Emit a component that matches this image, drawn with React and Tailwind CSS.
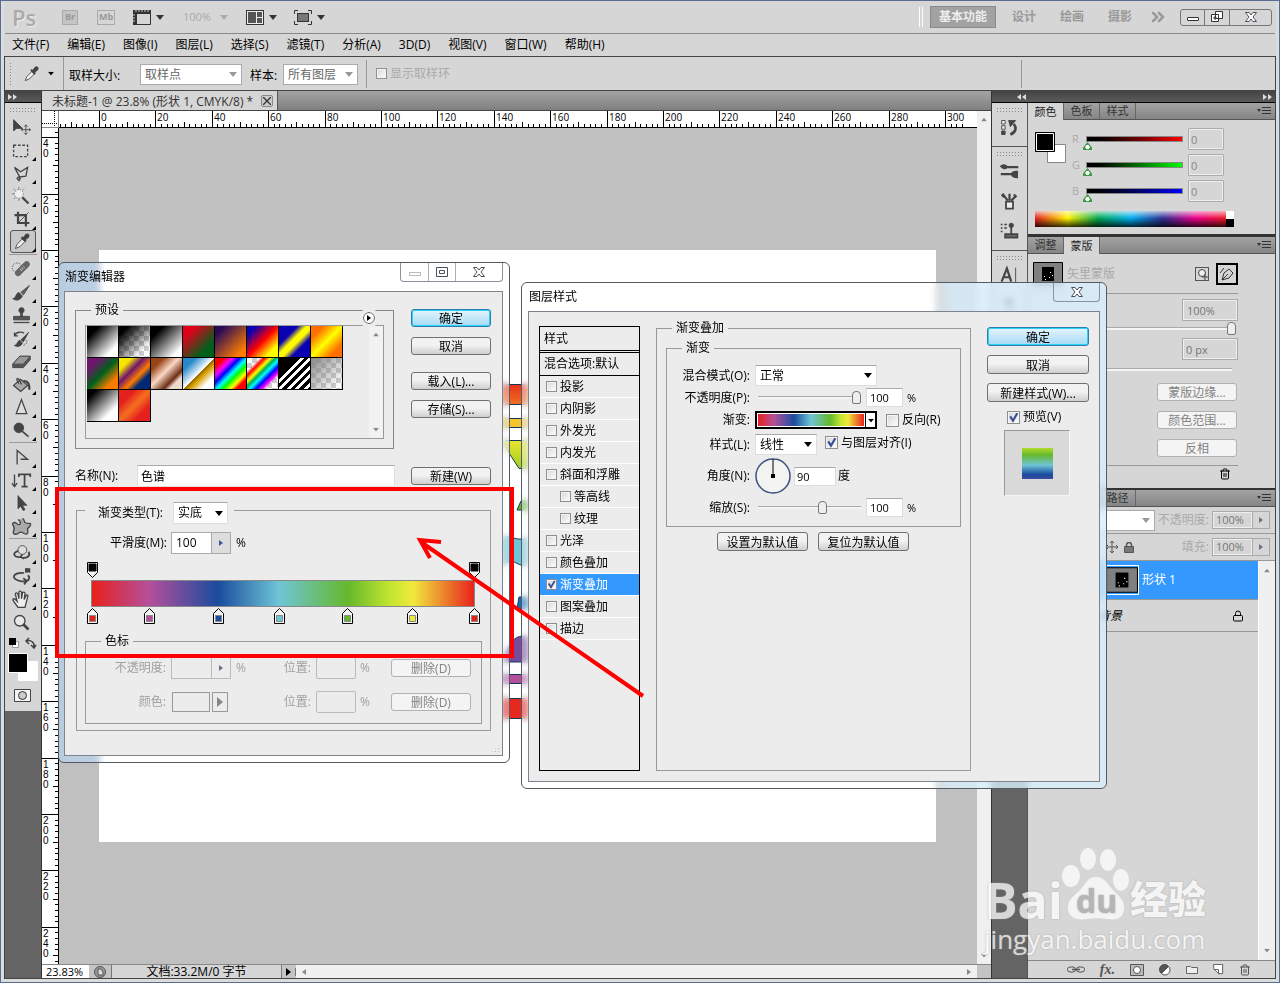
import { ChevronsRight, Link, Trash2, Lock } from 'lucide-react';
import { clsx } from 'clsx';

const MENUS = ['文件(F)', '编辑(E)', '图像(I)', '图层(L)', '选择(S)', '滤镜(T)', '分析(A)', '3D(D)', '视图(V)', '窗口(W)', '帮助(H)'];

const TOOLS = [
  { name: '移动', icon: <><path d="M3 3v13l3-3h7z" fill="#444" /><path d="M17 9v11M12 14.500h10M15 11l2-2 2 2M15 18l2 2 2-2M13.500 13l-2 1.500 2 1.500M20.500 13l2 1.500-2 1.500" /></>, noCorner: true },
  { name: '矩形选框', icon: <rect x="3" y="6" width="16" height="13" strokeDasharray="3 2" strokeWidth="1.500" /> },
  { name: '套索', icon: <path d="M4 5l7 5 8-5-2 10-7 1-6-11M10 16c-3 0-4 2-2 3s3-1 2-3l-1 5" strokeWidth="1.500" /> },
  { name: '魔棒', icon: <><circle cx="9" cy="9" r="5" fill="#eee" stroke="#777" strokeDasharray="1.500 1.500" /><path d="M9 1v3M9 14v3M1 9h3M3 3l2 2M15 3l-2 2M3 15l2-2" stroke="#777" /><path d="M13 13l7 7" strokeWidth="2.500" /></> },
  { name: '裁剪', icon: <><path d="M8 3v13h13M4 7h13v13" strokeWidth="2.500" /><path d="M9 15L20 4" /></> },
  { name: '吸管', icon: <><path d="M5 20l2-5 6-6 3 3-6 6z" fill="#eee" /><path d="M12 7l5 5M14 9l3-4c2-2 4 0 2 2l-4 3z" fill="#333" strokeWidth="2.500" /></>, active: true },
  { name: '修复画笔', sep: true, icon: <><circle cx="7" cy="10" r="5.500" strokeDasharray="1.500 1.500" /><path d="M8 16L18 6" strokeWidth="7" stroke="#666" strokeLinecap="round" /><path d="M11 13l4-4" stroke="#ccc" strokeWidth="3" strokeDasharray="1 1.500" /></> },
  { name: '画笔', icon: <><path d="M2 19c4 0 3-6 7-7l4 4c-2 5-7 6-11 3z" fill="#444" /><path d="M11 12l10-8-7 11" fill="#666" /></> },
  { name: '图章', icon: <><circle cx="12" cy="6" r="3" fill="#444" /><path d="M12 7v7" strokeWidth="3" /><path d="M3 13h18v4H3z" fill="#555" /><path d="M3 20h18" strokeWidth="1.500" /></> },
  { name: '历史画笔', icon: <><path d="M4 20c3 0 3-5 6-6l3 3c-1 4-6 5-9 3zM11 14l9-9-6 11" fill="#444" /><path d="M4 9c2-5 8-5 11-3M4 5v4h4" strokeWidth="1.500" /><path d="M18 14c1 3-2 6-5 6" strokeDasharray="1.500 1.500" /></> },
  { name: '橡皮擦', icon: <><path d="M2 19v-4l8-9h12v4l-8 9z" fill="#555" /><path d="M2 15l8-9h12l-8 9z" fill="#999" /></> },
  { name: '油漆桶', icon: <><path d="M3 13l8-7 8 7-8 7z" fill="#aaa" strokeWidth="1.500" /><path d="M12 12C8 1 4 5 9 11" strokeWidth="1.500" /><path d="M14 8c7 0 7 5 7 10" strokeWidth="2.500" /></> },
  { name: '锐化', icon: <path d="M12 3l6 16H6z" fill="#ddd" strokeWidth="1.500" /> },
  { name: '减淡', icon: <><circle cx="9" cy="9" r="5.500" fill="#444" /><path d="M13 13l7 6" strokeWidth="2" /></> },
  { name: '钢笔', sep: true, icon: <path d="M7 20V4l12 10h-8" strokeWidth="1.500" /> },
  { name: '文字', icon: <><path d="M4 5v13M1 15l3 4 3-4" strokeWidth="1.500" /><path d="M9 8V5h13v3M15.500 5v14M12 19h7" strokeWidth="2" /></> },
  { name: '路径选择', icon: <path d="M8 3v15l3-3 3 5 2-1-3-5h5z" fill="#444" /> },
  { name: '自定形状', icon: <path d="M13 3c3 0 1 4 4 5s7-1 5 3-4 2-3 5 0 6-4 4-4-2-7 0-7 0-5-3 0-5-1-7 2-4 5-1 6-2 1-5 3-6z" fill="#aaa" strokeWidth="1.500" /> },
  { name: '3D 旋转', sep: true, icon: <><circle cx="13" cy="8" r="5" fill="#ddd" /><path d="M8 9c-8 3-4 8 4 7M20 10c3 5-2 7-6 7M13 13l-2 3 4 2" strokeWidth="2" /></> },
  { name: '3D 环绕', icon: <><path d="M16 5h6" strokeWidth="5" /><path d="M15 8C4 7 1 12 5 15s10 3 13 2 4-5 1-6M14 14l4 3-3 4" strokeWidth="2" /></> },
  { name: '抓手', icon: <path d="M8 21l-5-7c-2-2 0-4 2-2l2 2-2-8c0-2 2-2 3 0l1 5V4c0-2 3-2 3 0v7l1-6c0-2 3-2 3 0l-1 7 2-4c1-2 3-1 2 1l-3 12z" fill="#eee" strokeWidth="1.500" /> },
  { name: '缩放', noCorner: true, icon: <><circle cx="10" cy="10" r="6" fill="#e8e8e8" strokeWidth="1.500" /><path d="M14 14l6 6" strokeWidth="3" /></> },
];

const PRESETS = [
  'bg-[linear-gradient(135deg,#000_20%,#fff_80%)]',
  'bg-[linear-gradient(135deg,#000_15%,transparent_80%),repeating-conic-gradient(#ccc_0_25%,#fff_0_50%)] [background-size:auto,10px_10px]',
  'bg-[linear-gradient(135deg,#000_20%,#fff_85%)]',
  'bg-[linear-gradient(135deg,#e3001b_20%,#00601b_75%)]',
  'bg-[linear-gradient(135deg,#290a59_15%,#ff7c00_85%)]',
  'bg-[linear-gradient(135deg,#0a00b2_15%,#ff0000_50%,#fffc00_80%)]',
  'bg-[linear-gradient(135deg,#0a00b2_30%,#fffc00_45%,#fffc00_55%,#0a00b2_70%)]',
  'bg-[linear-gradient(135deg,#ff6e00_20%,#ffff00_50%,#ff6e00_80%)]',
  'bg-[linear-gradient(135deg,#6f156c_20%,#00601b_50%,#fd7c00_80%)]',
  'bg-[linear-gradient(135deg,#f9e600_20%,#6f156c_40%,#fd7c00_60%,#002874_75%)]',
  'bg-[linear-gradient(135deg,#974618_20%,#fbd8c5_45%,#6c2e16_70%,#efdbcd_80%)]',
  'bg-[linear-gradient(135deg,#2989cc_20%,#fff_50%,#906a00_51%,#d99f00_60%,#fff_80%)]',
  'bg-[linear-gradient(135deg,#f00_15%,#f0f_28%,#00f_40%,#0ff_52%,#0f0_62%,#ff0_75%,#f00_84%)]',
  'bg-[linear-gradient(135deg,transparent_20%,#f00_28%,#ff0_38%,#00b050_46%,#0ff_54%,#00f_64%,#f0f_74%,transparent_80%),repeating-conic-gradient(#ccc_0_25%,#fff_0_50%)] [background-size:auto,10px_10px]',
  'bg-[linear-gradient(135deg,#000_30%,transparent_30%),repeating-linear-gradient(135deg,#000_0_3px,#fff_3px_6px)]',
  'bg-[linear-gradient(135deg,#888,transparent_90%),repeating-conic-gradient(#ccc_0_25%,#fff_0_50%)] [background-size:auto,10px_10px]',
  'bg-[linear-gradient(135deg,#000_15%,#fff_75%)]',
  'bg-[linear-gradient(135deg,#e6201e_25%,#f47020_50%,#e6201e_75%)]',
];

const STOPS = [
  [6, '#e8201c'], [63, '#b54f9b'], [132, '#1a4c9f'], [193, '#6ec5d6'], [261, '#66b82b'], [326, '#f1e83c'], [388, '#e8201c'],
];

const EFFECTS = [
  ['投影'], ['内阴影'], ['外发光'], ['内发光'], ['斜面和浮雕'], ['等高线', 'sub'], ['纹理', 'sub'],
  ['光泽'], ['颜色叠加'], ['渐变叠加', 'on'], ['图案叠加'], ['描边'],
];

const Caret = ({ className = 'fill-black' }) => (
  <svg viewBox="0 0 8 5" className={clsx('pointer-events-none h-[5px] w-2 shrink-0', className)}><path d="M0 0h8L4 5z" /></svg>
);

const Play = ({ className = 'fill-gray-500' }) => (
  <svg viewBox="0 0 4 6" className={clsx('h-1.5 w-1 shrink-0', className)}><path d="M0 0v6l4-3z" /></svg>
);

const Check = ({ label, checked, className, box = 'size-[13px]' }) => (
  <label className={clsx('flex items-center gap-[3px] whitespace-nowrap', className)}>
    <span className={clsx('grid shrink-0', box)}>
      <input type="checkbox" defaultChecked={checked} className={clsx('peer col-start-1 row-start-1 appearance-none border border-[#8e8f8f] bg-linear-to-br from-[#d3d6da] to-white shadow-[inset_0_0_0_1px_#f4f4f4]', box)} />
      <svg viewBox="0 0 12 12" className={clsx('pointer-events-none invisible col-start-1 row-start-1 fill-none stroke-[#3b4d91] stroke-2 peer-checked:visible', box)}><path d="M3 5l2.500 4L9.500 2" /></svg>
    </span>
    {label}
  </label>
);

const Select = ({ value, label, id, className, caret }) => (
  <span className={clsx('flex shrink-0 items-center border bg-white', className)}>
    <select id={id} aria-label={label} className="w-full min-w-0 appearance-none bg-transparent px-1 outline-none">
      <option>{value}</option>
    </select>
    <span className="pointer-events-none -ml-3 mr-1"><Caret className={caret} /></span>
  </span>
);

const DialogButton = ({ children, primary, disabled, className = 'h-[18px] w-20' }) => (
  <button
    disabled={disabled}
    className={clsx(
      'flex shrink-0 items-center justify-center whitespace-nowrap rounded-[3px] border pt-0.5',
      primary && 'border-[#2c7fa8] bg-linear-to-b from-[#e3f4fd] to-[#a7dbf5] shadow-[inset_0_0_0_1px_#2cd0fb]',
      disabled && 'border-[#adb2b5] bg-[#f4f4f4] text-[#838383]',
      !primary && !disabled && 'border-[#707070] bg-linear-to-b from-[#f2f2f2] from-45% to-[#cfcfcf]',
      className,
    )}
  >
    {children}
  </button>
);

const PanelTabs = ({ tabs, active }) => (
  <div className="flex h-[17px] shrink-0 items-stretch border-b border-[#555] bg-linear-to-b from-[#a3a3a3] to-[#858585]">
    {tabs.map((t) => (
      <button key={t} className={clsx('w-9 border-r border-[#666] text-[11px] leading-4', t === active ? '-mb-px bg-[#d6d6d6] text-[#222]' : 'text-[#333]')}>{t}</button>
    ))}
    <button aria-label="面板菜单" className="ml-auto mr-1">
      <svg viewBox="0 0 14 8" className="h-2 w-3.5 stroke-[#333]"><path d="M0 2h4L2 5z" fill="#333" stroke="none" /><path d="M5 .5h9M5 3.500h9M5 6.500h9" /></svg>
    </button>
  </div>
);

const Grip = () => <div className="mx-auto h-[5px] w-7 shrink-0 bg-[radial-gradient(#888_40%,transparent_45%)] [background-size:3px_3px]" />;

const HorizontalRuler = () => (
  <svg className="h-[17px] min-w-0 flex-1 bg-white font-['Open_Sans',sans-serif] text-[10px]">
    {Array.from({ length: 161 }, (_, i) => {
      const n = i - 7;
      const x = Math.round(40 + n * 5.64) + 0.5;
      const len = n % 10 === 0 ? 17 : n % 5 === 0 ? 6 : 4;
      return <path key={n} d={`M${x} 17v-${len}`} stroke="#000" />;
    })}
    {Array.from({ length: 16 }, (_, i) => (
      <text key={i} x={Math.round(42 + i * 56.4)} y="10">{i * 20}</text>
    ))}
    <rect y="16" width="100%" height="1" />
  </svg>
);

const VerticalRuler = () => (
  <svg className="w-[17px] shrink-0 bg-white font-['Liberation_Sans',sans-serif] text-[10px]">
    {Array.from({ length: 150 }, (_, i) => {
      const n = i - 21;
      const y = Math.round(122 + n * 5.64) + 0.5;
      const len = n % 10 === 0 ? 17 : n % 5 === 0 ? 6 : 4;
      return <path key={n} d={`M17 ${y}h-${len}`} stroke="#000" />;
    })}
    {Array.from({ length: 15 }, (_, i) => String(Math.abs(i - 2) * 20).split('').map((d, k) => (
      <text key={`${i}-${k}`} x="1" y={Math.round(132 + (i - 2) * 56.4) + k * 10}>{d}</text>
    )))}
    <rect x="16" width="1" height="100%" />
  </svg>
);

const CloseGlyph = () => (
  <svg viewBox="0 0 12 10" className="h-2.5 w-3 fill-white stroke-[#4a4f5c]"><path d="M.5.500h3.500l2 2.500L8 .500h3.500L8 5l3.500 4.500H8L6 7 4 9.500H.5L4 5z" /></svg>
);

const TopBar = () => (
  <header className="flex h-8 shrink-0 items-center pl-2 pr-1 text-[#999]">
    <span className="w-[50px] text-[22px] font-semibold leading-8 text-[#aaa] [text-shadow:1px_1px_0_#eee]">Ps</span>
    <button className="h-[15px] w-4 border border-[#aaa] bg-[#c4c4c4] text-[9px] font-bold leading-3 text-[#999]">Br</button>
    <button className="ml-[19px] h-[15px] w-[18px] border border-[#aaa] text-[9px] font-bold leading-3">Mb</button>
    <button aria-label="查看额外内容" className="ml-[18px] flex items-center gap-[5px]">
      <svg viewBox="0 0 18 15" className="h-[15px] w-[18px]"><path d="M0 0h18v4H4v11H0z" fill="#333" /><path d="M17.500 4v10.500H4" stroke="#333" fill="none" /><path d="M3 0v2M6 0v2M9 0v2M12 0v2M15 0v2M0 5h2M0 8h2M0 11h2" stroke="#ccc" /></svg>
      <Caret className="fill-[#333]" />
    </button>
    <button className="ml-[19px] flex items-center gap-[9px] text-[11px] text-[#aaa]">100%<Caret className="fill-[#aaa]" /></button>
    <button aria-label="排列文档" className="ml-[18px] flex items-center gap-[5px]">
      <svg viewBox="0 0 18 15" className="h-[15px] w-[18px]"><rect x=".5" y=".5" width="17" height="14" fill="#eee" stroke="#333" /><path d="M2 2h8v11H2zM11 2h5v5h-5zM11 8h5v5h-5z" fill="#555" /></svg>
      <Caret className="fill-[#333]" />
    </button>
    <button aria-label="屏幕模式" className="ml-[17px] flex items-center gap-[5px]">
      <svg viewBox="0 0 18 15" className="h-[15px] w-[18px]"><rect x="3.500" y="3.500" width="11" height="8" fill="#777" stroke="#333" /><path d="M.5 4V.500H4M14 .5h3.500V4M17.500 11v3.500H14M4 14.500H.5V11" fill="none" stroke="#333" /></svg>
      <Caret className="fill-[#333]" />
    </button>
    <span className="ml-auto mr-[7px] h-5 w-1 border-x border-white" />
    <nav className="flex items-center font-bold">
      <button className="h-[22px] w-[66px] border border-[#8a8a8a] bg-[#a2a2a2] text-[#eee]">基本功能</button>
      <button className="w-14">设计</button>
      <button className="w-10">绘画</button>
      <button className="w-14">摄影</button>
      <ChevronsRight className="size-5" strokeWidth={3} />
    </nav>
    <div className="ml-3 flex h-[17px] rounded-[3px] border border-[#777] text-[#333]">
      <button aria-label="最小化" className="flex w-6 items-center justify-center border-r border-[#777] pt-1"><span className="h-1 w-3 rounded-[1px] border border-[#333] bg-white" /></button>
      <button aria-label="还原" className="flex w-[25px] items-center justify-center border-r border-[#777]">
        <svg viewBox="0 0 12 12" className="size-3 fill-white stroke-[#333]"><path d="M4.500.500h7v7h-7zM.5 3.500h7v7h-7zM3 6h2v2H3z" /></svg>
      </button>
      <button aria-label="关闭" className="flex w-[41px] items-center justify-center"><CloseGlyph /></button>
    </div>
  </header>
);

const OptionsBar = () => (
  <div className="flex h-[34px] shrink-0 items-center border-b border-[#444] pl-1">
    <span className="h-6 w-1 bg-[radial-gradient(#888_40%,transparent_45%)] [background-size:3px_3px]" />
    <button aria-label="吸管工具" className="ml-2 flex items-center gap-1.5">
      <svg viewBox="0 0 24 24" className="size-5 fill-none stroke-[#444]">{TOOLS[5].icon}</svg>
      <Caret className="scale-75 fill-black" />
    </button>
    <span className="ml-2 h-full border-l border-[#999]" />
    <label htmlFor="sample" className="ml-[5px] mt-1 w-[71px]">取样大小:</label>
    <Select id="sample" value="取样点" className="mt-0.5 h-[21px] w-[102px] border-[#aaa] text-[#666]" caret="fill-[#999]" />
    <label htmlFor="source" className="ml-2 mt-1 w-[33px]">样本:</label>
    <Select id="source" value="所有图层" className="mt-0.5 h-[21px] w-[75px] border-[#aaa] text-[#666]" caret="fill-[#999]" />
    <span className="ml-2 mr-[9px] h-7 border-l border-[#999]" />
    <Check label="显示取样环" box="size-[11px]" className="text-[#aaa]" />
    <span className="ml-auto mr-[253px] h-7 border-l border-[#999]" />
  </div>
);

const Toolbox = () => (
  <aside className="flex w-[37px] shrink-0 flex-col border-r border-[#333] bg-[#646464]">
    <button aria-label="展开" className="flex h-3 shrink-0 items-center gap-px border-b border-black bg-linear-to-b from-[#444] to-[#5a5a5a] pl-[3px]">
      <Play className="fill-[#ddd]" /><Play className="fill-[#ddd]" />
    </button>
    <div className="flex flex-col bg-[#d6d6d6] pb-1 pt-1">
      <Grip />
      <div className="mt-[3px] flex flex-col items-center">
        {TOOLS.map(({ name, icon, active, sep, noCorner }) => (
          <div key={name} className={clsx('flex w-7 flex-col items-center', sep && 'mt-px border-t border-[#999] pt-0.5')}>
            <button title={name} className={clsx('flex h-[23px] w-[26px] items-end justify-center', active && 'rounded-[3px] border border-[#555] bg-[#c8c8c8]')}>
              <svg viewBox="0 0 24 24" className="size-[21px] shrink-0 fill-none stroke-[#444]">{icon}</svg>
              <svg viewBox="0 0 4 4" className={clsx('size-1 shrink-0', noCorner && 'invisible')}><path d="M4 0v4H0z" /></svg>
            </button>
          </div>
        ))}
      </div>
      <svg viewBox="0 0 36 74" className="h-[74px] w-9">
        <path d="M7.500 8.500h6v6h-6z" fill="#fff" stroke="#999" /><path d="M4 5h7v7H4z" />
        <path d="M21 8c5-2 9 2 8 6M24 5l-3 3 3 3M26 12l3 3 2-3" fill="none" stroke="#444" strokeWidth="1.500" />
        <path d="M13 28h20v20H13z" fill="#fff" />
        <path d="M3.500 20.500h19v19h-19z" stroke="#fff" />
        <path d="M9.500 56.500h16v12h-16z" fill="#f5f5f5" stroke="#444" /><circle cx="17.500" cy="62.500" r="4" fill="#ccc" stroke="#333" />
      </svg>
    </div>
  </aside>
);

// Strips of the rainbow shape that show between the two dialogs
const Artwork = () => (
  <svg viewBox="0 0 30 350" className="ml-[400px] mt-[130px] h-[350px] w-[30px] stroke-[#103a5c]">
    <defs>
      <linearGradient id="art-r" x1="0" x2="0" y1="0" y2="1"><stop stopColor="#e8321c" /><stop offset="1" stopColor="#f07022" /></linearGradient>
      <linearGradient id="art-y" x1="0" x2="0" y1="0" y2="1"><stop stopColor="#e8e430" /><stop offset="1" stopColor="#a5cc20" /></linearGradient>
    </defs>
    <path d="M2 4.500h28v20H2z" fill="url(#art-r)" />
    <path d="M2 38.500h28v9H2z" fill="#f6c42e" />
    <path d="M3 60.500h27v28h-10l-9-14z" fill="url(#art-y)" />
    <path d="M18 130l4-9h8v9z" fill="#66b82b" />
    <path d="M2 158c8-4 16 4 26 0v26c-8 6-14-10-24 2z" fill="#6ec5d6" />
    <path d="M20 217h10v12H18z" fill="#1a6cb5" />
    <path d="M4 282c5-22 16-30 26-24v24z" fill="#7a4aa0" />
    <path d="M2 294.500h28v9H2z" fill="#b54f9b" />
    <path d="M2 318.500h28v20H2z" fill="#e6281f" />
  </svg>
);

const ScrollArrow = ({ className }) => <Caret className={clsx('mx-auto fill-[#888] scale-75', className)} />;

const DocumentWindow = () => (
  <main className="flex min-w-0 flex-1 flex-col border-r border-[#333]">
    <div className="flex h-5 shrink-0 border-b border-[#444] bg-linear-to-b from-[#a3a3a3] to-[#808080]">
      <div className="flex w-[236px] items-center justify-between border-r border-[#555] bg-[#d6d6d6] pl-2.5 pr-1 text-[#333]">
        <span className="whitespace-nowrap pt-0.5">未标题-1 @ 23.8% (形状 1, CMYK/8) *</span>
        <button aria-label="关闭文档" className="flex size-3 items-center justify-center rounded-[2px] border border-[#888] bg-[#ccc]">
          <svg viewBox="0 0 6 6" className="size-2 stroke-[#333]"><path d="M0 0l6 6M6 0L0 6" /></svg>
        </button>
      </div>
    </div>
    <div className="flex flex-1">
      <div className="flex min-w-0 flex-1 flex-col">
        <div className="flex shrink-0">
          <svg className="size-[17px] shrink-0 bg-white"><path d="M12.500 0v17M0 12.500h17" stroke="#000" strokeDasharray="1 1" /><path d="M16.500 0v17M0 16.500h17" stroke="#888" /></svg>
          <HorizontalRuler />
        </div>
        <div className="flex flex-1">
          <VerticalRuler />
          <div className="flex flex-1 bg-[#c0c0c0] pb-[122px] pl-10 pr-[41px] pt-[122px]">
            <div className="flex-1 bg-white"><Artwork /></div>
          </div>
        </div>
      </div>
      <div className="flex w-3.5 shrink-0 flex-col justify-between bg-[#f0f0f0] py-1.5"><ScrollArrow className="rotate-180" /><ScrollArrow /></div>
    </div>
    <div className="flex h-[14px] shrink-0 items-center border-t border-[#888] bg-[#c4c4c4] leading-[13px]">
      <span className="w-[47px] bg-white pl-1 text-[11px]">23.83%</span>
      <span className="flex w-[22px] justify-center">
        <svg viewBox="0 0 12 12" className="size-3 fill-[#999] stroke-[#555]"><circle cx="6" cy="6" r="5.500" /><path d="M4 3h3l2 3v3H4z" fill="#ddd" /></svg>
      </span>
      <span className="w-[171px] border-x border-[#777] bg-[#d6d6d6] text-center">文档:33.2M/0 字节</span>
      <button aria-label="状态菜单" className="flex w-3.5 justify-center border-r border-[#777]"><svg viewBox="0 0 5 8" className="h-2 w-[5px]"><path d="M0 0v8l5-4z" /></svg></button>
      <span className="flex h-full flex-1 items-center justify-between bg-[#f0f0f0] px-1.5"><Play className="rotate-180 fill-[#888]" /><Play className="fill-[#888]" /></span>
      <span className="w-3.5" />
    </div>
  </main>
);

const DOCK = [
  [{ name: '历史记录', icon: <><path d="M3 4h4v4H3zM3 10h4v4H3z" fill="#eee" /><path d="M3 16h4v4H3z" fill="#444" /><path d="M13 20c7-3 7-8 4-12" strokeWidth="3" /><path d="M11 4h8l-6 7z" fill="#444" /></> }],
  [
    { name: '画笔预设', icon: <><path d="M2 6c3-3 7-1 8 1-3 3-7 1-8-1zM14 15c2-4 6-3 7-3v7c-4 0-6-1-7-4z" fill="#444" strokeWidth="1.500" /><path d="M10 7h12M2 15h12" strokeWidth="2.500" /></> },
    { name: '画笔', icon: <><path d="M8 12h8v8H8z" fill="#eee" strokeWidth="2" /><path d="M10 11L4 3M12 11V3M14 11l5-5M3 4l3 3M17 4l3 3" strokeWidth="2.500" /></> },
    { name: '仿制源', icon: <><path d="M2 4h2M6 4h3M2 8h2M6 8h3M2 12h2" strokeWidth="1.500" /><circle cx="14" cy="5" r="2.500" fill="#444" /><path d="M14 6v8M7 15h14v4H7z" fill="#666" strokeWidth="2" /></> },
  ],
  [
    { name: '字符', icon: <><path d="M3 19L9 4l5 15M5 14h7" strokeWidth="2.500" /><path d="M19 3v17" /></> },
    { name: '段落', icon: <path d="M10 4a4 4 0 000 8V4h5v16M12 4v16" fill="#444" /> },
  ],
];

const DockStrip = () => (
  <div className="flex w-9 shrink-0 flex-col border-r border-[#555] bg-[#646464]">
    {DOCK.map((group, i) => (
      <div key={i} className="flex flex-col items-center border-b border-[#555] bg-[#d6d6d6] pb-[7px] pt-1">
        <Grip />
        <div className="mt-1 flex flex-col gap-[7px]">
          {group.map(({ name, icon }) => (
            <button key={name} title={name} className="py-px"><svg viewBox="0 0 24 24" className="size-[21px] fill-none stroke-[#444]">{icon}</svg></button>
          ))}
        </div>
      </div>
    ))}
  </div>
);

const CHANNELS = [
  ['R', '[&::-webkit-slider-runnable-track]:bg-linear-to-r [&::-webkit-slider-runnable-track]:from-black [&::-webkit-slider-runnable-track]:to-[#f00]'],
  ['G', '[&::-webkit-slider-runnable-track]:bg-linear-to-r [&::-webkit-slider-runnable-track]:from-black [&::-webkit-slider-runnable-track]:to-[#0f0]'],
  ['B', '[&::-webkit-slider-runnable-track]:bg-linear-to-r [&::-webkit-slider-runnable-track]:from-black [&::-webkit-slider-runnable-track]:to-[#00f]'],
];

const ColorPanel = () => (
  <section className="flex h-[131px] shrink-0 flex-col">
    <PanelTabs tabs={['颜色', '色板', '样式']} active="颜色" />
    <div className="flex flex-1 flex-col px-[7px] pt-2">
      <div className="flex">
        <svg viewBox="0 0 34 34" className="mt-1 size-[34px]"><path d="M12.500 12.500h18v18h-18z" fill="#fff" stroke="#888" /><path d="M.5.500h19v19H.5z" stroke="#000" /><path d="M1.500 1.500h17v17h-17z" stroke="#fff" /></svg>
        <div className="ml-[3px] flex flex-col gap-1">
          {CHANNELS.map(([ch, track]) => (
            <label key={ch} className="flex h-[22px] items-center text-[11px] text-[#aaa]">
              <span className="w-3.5">{ch}</span>
              <input type="range" defaultValue="0" aria-label={ch} className={clsx('w-[97px] appearance-none bg-transparent [&::-webkit-slider-runnable-track]:h-1.5 [&::-webkit-slider-runnable-track]:border [&::-webkit-slider-runnable-track]:border-[#888] [&::-webkit-slider-thumb]:-ml-1 [&::-webkit-slider-thumb]:mt-[5px] [&::-webkit-slider-thumb]:h-2 [&::-webkit-slider-thumb]:w-[9px] [&::-webkit-slider-thumb]:appearance-none [&::-webkit-slider-thumb]:bg-[radial-gradient(circle_at_50%_65%,#fff_28%,#3f9a45_34%)] [&::-webkit-slider-thumb]:[clip-path:polygon(50%_0,100%_70%,100%_100%,0_100%,0_70%)]', track)} />
              <input defaultValue="0" aria-label={`${ch} 值`} className="ml-[5px] h-[22px] w-9 rounded-[1px] border border-[#aaa] px-0.5 text-[#888] shadow-[inset_0_0_0_1px_#eee]" />
            </label>
          ))}
        </div>
      </div>
      <div className="mt-[9px] flex h-4 w-[199px]">
        <div className="flex-1 bg-[linear-gradient(to_bottom,#fffa,transparent_45%,#000c),linear-gradient(to_right,#e02020,#fff200_17%,#00a650_33%,#00aeef_50%,#2e3192_67%,#ec008c_84%,#ed1c24)]" />
        <div className="w-2 bg-linear-to-b from-white from-50% to-black to-50%" />
      </div>
    </div>
  </section>
);

const PanelSlider = ({ label, value }) => (
  <input type="range" aria-label={label} defaultValue={value} className="block h-3.5 w-full appearance-none bg-transparent [&::-webkit-slider-runnable-track]:h-[3px] [&::-webkit-slider-runnable-track]:border-t [&::-webkit-slider-runnable-track]:border-[#aaa] [&::-webkit-slider-runnable-track]:bg-[#f4f4f4] [&::-webkit-slider-thumb]:mt-[-6px] [&::-webkit-slider-thumb]:h-[13px] [&::-webkit-slider-thumb]:w-[9px] [&::-webkit-slider-thumb]:appearance-none [&::-webkit-slider-thumb]:rounded-t-[4px] [&::-webkit-slider-thumb]:rounded-b-[2px] [&::-webkit-slider-thumb]:border [&::-webkit-slider-thumb]:border-[#777] [&::-webkit-slider-thumb]:bg-[#eee]" />
);

const MaskThumb = ({ className }) => (
  <svg viewBox="0 0 30 24" className={className}><path d="M.5.500h29v23H.5z" fill="#808080" stroke="#000" /><path d="M9 5h12v14H9z" /><path d="M11 14h1v1h-1zM17 10h1v1h-1zM16 15h1v1h-1zM12 17h1v1h-1zM19 13h1v1h-1z" fill="#fff" /></svg>
);

const MasksPanel = () => (
  <section className="flex h-[251px] shrink-0 flex-col">
    <PanelTabs tabs={['调整', '蒙版']} active="蒙版" />
    <div className="ml-1 w-[206px]">
      <div className="mt-[7px] flex h-[25px] items-center">
        <MaskThumb className="h-6 w-8" />
        <span className="ml-[3px] mr-auto text-[#aaa]">矢里蒙版</span>
        <button aria-label="添加像素蒙版" className="mr-[7px] flex size-3.5 items-center justify-center border border-[#555]">
          <svg viewBox="0 0 12 12" className="size-3 fill-none stroke-[#444]"><circle cx="6" cy="5" r="3.500" fill="#eee" /><path d="M9 6v6M6 9h6" /></svg>
        </button>
        <button aria-label="选择矢量蒙版" className="flex size-[22px] items-center justify-center border-2 border-black">
          <svg viewBox="0 0 16 16" className="size-4 fill-none stroke-[#333]"><path d="M3 14l2-7 5-4 4 4-4 5zM3 14l6-6M1 7l4-5" /></svg>
        </button>
      </div>
      <div className="mt-[7px] border-t border-[#999] pt-[5px]">
        <input aria-label="浓度" defaultValue="100%" className="ml-auto block h-[22px] w-14 border border-[#aaa] px-1 text-[11px] text-[#777] shadow-[inset_0_0_0_1px_#eee]" />
        <div className="mr-0.5"><PanelSlider label="浓度滑块" value="100" /></div>
        <input aria-label="羽化" defaultValue="0 px" className="ml-auto mt-[3px] block h-[22px] w-14 border border-[#aaa] px-[3px] text-[11px] text-[#777] shadow-[inset_0_0_0_1px_#eee]" />
        <div className="mr-[6px] mt-2 h-[3px] border-t border-[#aaa] bg-[#f4f4f4]" />
      </div>
      <div className="mt-3 flex flex-col items-end gap-[10px] pr-px">
        {['蒙版边缘...', '颜色范围...', '反相'].map((t) => <DialogButton key={t} disabled>{t}</DialogButton>)}
      </div>
      <div className="mt-2 flex justify-end border-t border-[#999] pr-[7px] pt-0.5">
        <button aria-label="删除蒙版"><Trash2 className="size-3 text-black" /></button>
      </div>
    </div>
  </section>
);

const PercentField = ({ label }) => (
  <label className="flex items-center gap-[3px] text-[#aaa]">
    {label}
    <span className="flex h-[18px] border border-[#aaa]">
      <input defaultValue="100%" className="w-10 border-r border-[#aaa] px-[3px] text-[11px] text-[#777] shadow-[inset_0_0_0_1px_#eee]" />
      <span className="flex w-4 items-center justify-center"><Play /></span>
    </span>
  </label>
);

const LayersPanel = () => (
  <section className="flex flex-1 flex-col">
    <PanelTabs tabs={['图层', '通道', '路径']} />
    <div className="flex h-[27px] items-center justify-end gap-[3px] border-b border-[#999] pr-[5px]">
      <Select label="图层混合模式" value="正常" className="h-[21px] w-[120px] border-[#aaa] text-[#777]" caret="fill-[#999]" />
      <PercentField label="不透明度:" />
    </div>
    <div className="flex h-[27px] items-center border-b border-[#999] pr-[5px]">
      <span className="ml-[78px] flex w-8 items-center gap-1.5">
        <svg viewBox="0 0 12 12" className="size-3 shrink-0 fill-none stroke-[#555]"><path d="M6 0v12M0 6h12M4 2l2-2 2 2M4 10l2 2 2-2M2 4L0 6l2 2M10 4l2 2-2 2" /></svg>
        <LockGlyph />
      </span>
      <span className="ml-auto"><PercentField label="填充:" /></span>
    </div>
    <div className="flex flex-1">
      <div className="flex flex-1 flex-col">
        <button className="flex h-[39px] items-center border-b border-[#999] bg-[#3399ff] pl-[78px] text-white"><MaskThumb className="mr-1 h-7 w-8 outline outline-white" />形状 1</button>
        <button className="flex h-8 items-center justify-between border-b border-[#999] pl-[70px] pr-[14px] italic">背景<Lock className="size-3" /></button>
      </div>
      <div className="flex w-[17px] flex-col justify-between border-l border-white bg-[#f0f0f0] py-[7px]"><ScrollArrow className="rotate-180" /><ScrollArrow /></div>
    </div>
    <footer className="flex h-[18px] items-center justify-end gap-[15px] border-t border-[#888] pr-6 text-[#555]">
      <button aria-label="链接图层"><svg viewBox="0 0 18 8" className="h-2 w-[18px] fill-none stroke-[#555]"><rect x=".5" y="1" width="8" height="5" rx="2.500" /><rect x="9.500" y="1" width="8" height="5" rx="2.500" /><path d="M5 3.500h8" strokeWidth="1.500" /></svg></button>
      <button aria-label="图层样式" className="font-['Liberation_Serif',serif] text-sm font-bold italic leading-3">fx.</button>
      <button aria-label="图层蒙版"><svg viewBox="0 0 14 12" className="h-3 w-3.5 stroke-[#555]"><path d="M.5.500h13v11H.5z" fill="#bbb" /><circle cx="7" cy="6" r="3.500" fill="#fff" /></svg></button>
      <button aria-label="调整图层"><svg viewBox="0 0 12 12" className="size-3 fill-white stroke-[#555]"><circle cx="6" cy="6" r="5" /><path d="M2.500 9.500A5 5 0 119.500 2.500z" fill="#555" /></svg></button>
      <button aria-label="新建组"><svg viewBox="0 0 12 10" className="h-2.5 w-3 fill-[#eee] stroke-[#666]"><path d="M.5 8.500v-7h4l1 1h6v6z" /></svg></button>
      <button aria-label="新建图层"><svg viewBox="0 0 12 12" className="size-[11px] fill-white stroke-[#555]"><path d="M.5.500h10v10H6l-5-5zM1 6h5v5" /></svg></button>
      <button aria-label="删除图层"><Trash2 className="size-3" /></button>
    </footer>
  </section>
);

const LockGlyph = () => (
  <svg viewBox="0 0 10 11" className="h-[11px] w-2.5 shrink-0 stroke-[#555]"><path d="M2.500 5V3a2.500 2.500 0 015 0v2" fill="none" strokeWidth="1.500" /><path d="M.5 4.500h9v6h-9z" fill="#777" /></svg>
);

const DockArea = () => (
  <aside className="flex w-[283px] shrink-0 flex-col">
    <div className="flex h-3 shrink-0 items-center border-b border-black bg-linear-to-b from-[#444] to-[#5a5a5a] pl-[25px] pr-[3px]">
      <span className="flex gap-px"><Play className="rotate-180 fill-[#ddd]" /><Play className="rotate-180 fill-[#ddd]" /></span>
      <span className="ml-auto flex gap-px"><Play className="fill-[#ddd]" /><Play className="fill-[#ddd]" /></span>
    </div>
    <div className="flex flex-1">
      <DockStrip />
      <div className="flex flex-1 flex-col">
        <ColorPanel />
        <div className="h-[3px] shrink-0 bg-[#333]" />
        <MasksPanel />
        <div className="h-0.5 shrink-0 bg-[#333]" />
        <LayersPanel />
      </div>
    </div>
  </aside>
);

const Ramp = () => (
  <svg viewBox="0 0 395 63" className="ml-px mt-2 h-[63px] w-[395px] stroke-black">
    <defs>
      <linearGradient id="ramp">
        <stop offset="0" stopColor="#e8201c" /><stop offset="0.150" stopColor="#b54f9b" /><stop offset="0.330" stopColor="#1a4c9f" />
        <stop offset="0.490" stopColor="#6ec5d6" /><stop offset="0.670" stopColor="#66b82b" /><stop offset="0.780" stopColor="#c3e630" />
        <stop offset="0.840" stopColor="#f1e83c" /><stop offset="1" stopColor="#e8201c" />
      </linearGradient>
    </defs>
    <path d="M5.500 18.500h383v26h-383z" fill="url(#ramp)" stroke="#888" />
    {[6, 388].map((x) => (
      <g key={x} transform={`translate(${x - 5} 0)`}><path d="M.5.500h10v10l-5 5-5-5z" fill="#f4f4f4" /><path d="M2 2h7v7H2z" /></g>
    ))}
    {STOPS.map(([x, c]) => (
      <g key={x} transform={`translate(${x - 5} 46)`}><path d="M.5 5.500l5-5 5 5v10H.5z" fill="#f4f4f4" /><path d="M2.500 7.500h6v6h-6z" fill={c} stroke="#888" /></g>
    ))}
  </svg>
);

const GlassTitle = ({ children, buttons }) => (
  <div className="flex h-7 items-start justify-between">
    <span className="pl-px pt-1.5">{children}</span>
    <div className="flex h-[19px] rounded-b-[4px] border border-t-0 border-[#8a929c]">{buttons}</div>
  </div>
);

const GradientEditor = () => (
  <div role="dialog" aria-label="渐变编辑器" className="absolute left-[58px] top-[262px] w-[452px] rounded-md border border-[#555b63] bg-[linear-gradient(to_right,#b9d1eacc_34px,#ffffff66_46px)] pb-1.5 pl-[5px] pr-1.5 backdrop-blur-[3px]">
    <GlassTitle
      buttons={<>
        <button aria-label="最小化" className="flex w-7 items-center justify-center border-r border-[#aab0b8] pt-1"><span className="h-1 w-3 border border-[#bbb]" /></button>
        <button aria-label="最大化" className="flex w-[27px] items-center justify-center border-r border-[#aab0b8]"><svg viewBox="0 0 12 10" className="h-2.5 w-3 fill-white stroke-[#4a4f5c]"><path d="M.5.500h11v9H.5zM3.500 3.500h5v3h-5z" /></svg></button>
        <button aria-label="关闭" className="flex w-[46px] items-center justify-center"><CloseGlyph /></button>
      </>}
    >
      渐变编辑器
    </GlassTitle>
    <div className="border border-[#7c838b] bg-[#ececec] pl-[10px] pt-2">
      <div className="flex">
        <fieldset className="relative h-[149px] w-[319px] border border-[#888] px-[9px]">
          <legend className="ml-1.5 h-5 px-1 leading-5">预设</legend>
          <button aria-label="预设菜单" className="absolute -top-2 right-[18px] flex size-3 items-center justify-center rounded-full border border-[#555] bg-white outline-4 outline-[#ececec]"><Play className="fill-black" /></button>
          <div className="mt-[5px] flex h-[114px] border border-[#999] pl-px">
            <div className="grid w-[256px] grid-cols-8 content-start">
              {PRESETS.map((bg, i) => <button key={i} aria-label={`渐变 ${i + 1}`} className={clsx('h-8 border-b border-r border-black', bg)} />)}
            </div>
            <div className="ml-auto flex w-3.5 flex-col justify-between bg-[#f2f2f2] py-1.5"><ScrollArrow className="rotate-180" /><ScrollArrow /></div>
          </div>
        </fieldset>
        <div className="ml-[17px] flex flex-col gap-[10px] pt-[9px]">
          <DialogButton primary>确定</DialogButton>
          <DialogButton>取消</DialogButton>
          <div className="mt-[7px] flex flex-col gap-[10px]">
            <DialogButton>载入(L)...</DialogButton>
            <DialogButton>存储(S)...</DialogButton>
          </div>
        </div>
      </div>
      <div className="mt-4 flex items-center">
        <label htmlFor="grad-name" className="w-[62px]">名称(N):</label>
        <input id="grad-name" defaultValue="色谱" className="h-[22px] w-[258px] border border-[#e0e0e0] border-t-[#aaa] bg-white px-[3px]" />
        <DialogButton className="ml-4 h-[18px] w-20">新建(W)</DialogButton>
      </div>
      <fieldset className="ml-px mt-[9px] w-[415px] border border-[#999] pb-1.5 pl-2">
        <legend className="flex h-7 items-end pl-[13px] pr-1.5">
          <label htmlFor="grad-type" className="mb-[3px] w-[75px]">渐变类型(T):</label>
          <Select id="grad-type" value="实底" className="h-[22px] w-[55px] border-[#ddd] border-t-[#aaa]" />
        </legend>
        <div className="mt-2 flex items-center">
          <label htmlFor="smooth" className="w-[82px] text-right">平滑度(M):</label>
          <span className="ml-1 flex h-[22px] border border-[#aaa]">
            <input id="smooth" defaultValue="100" className="w-10 border-r border-[#aaa] bg-white px-1" />
            <button aria-label="平滑度滑块" className="flex w-[18px] items-center justify-center bg-[#ddd]"><Play className="fill-[#3b5998]" /></button>
          </span>
          <span className="ml-[5px]">%</span>
        </div>
        <Ramp />
        <fieldset disabled className="mt-2 w-[397px] border border-[#999] pb-2.5 text-[#a0a0a0]">
          <legend className="ml-[15px] h-4 px-1 text-black">色标</legend>
          <div className="mt-2 flex items-center">
            <label htmlFor="stop-op" className="w-20 text-right">不透明度:</label>
            <span className="ml-[5px] flex h-[22px] border border-[#bbb]">
              <input id="stop-op" className="w-10 border-r border-[#bbb]" />
              <span className="flex w-[18px] items-center justify-center"><Play /></span>
            </span>
            <span className="ml-[5px]">%</span>
            <label htmlFor="stop-pos" className="ml-auto">位置:</label>
            <input id="stop-pos" className="ml-[5px] h-[22px] w-10 rounded-[2px] border border-[#bbb]" />
            <span className="ml-1 w-[31px]">%</span>
            <DialogButton disabled>删除(D)</DialogButton>
            <span className="w-2.5" />
          </div>
          <div className="mt-3 flex items-center">
            <label htmlFor="stop-color" className="w-20 text-right">颜色:</label>
            <button id="stop-color" className="ml-1.5 h-5 w-[38px] border border-[#999]" />
            <button aria-label="颜色菜单" className="ml-0.5 mr-[35px] flex h-5 w-4 items-center justify-center border border-[#999]"><svg viewBox="0 0 6 10" className="h-2.5 w-1.5 fill-[#888]"><path d="M0 0v10l6-5z" /></svg></button>
            <label htmlFor="color-pos" className="ml-auto">位置:</label>
            <input id="color-pos" className="ml-[5px] h-[22px] w-10 rounded-[2px] border border-[#bbb]" />
            <span className="ml-1 w-[31px]">%</span>
            <DialogButton disabled>删除(D)</DialogButton>
            <span className="w-2.5" />
          </div>
        </fieldset>
      </fieldset>
      <div className="flex h-6 items-end justify-end p-0.5"><span className="size-[9px] bg-[radial-gradient(#bbb_40%,transparent_45%)] [background-size:3px_3px] [clip-path:polygon(100%_0,100%_100%,0_100%)]" /></div>
    </div>
  </div>
);

const Row = ({ label, htmlFor, className, children }) => (
  <div className={clsx('flex items-center', className)}>
    <label htmlFor={htmlFor} className="mr-[5px] w-[83px] shrink-0 whitespace-nowrap text-right">{label}</label>
    {children}
  </div>
);

const SliderRow = ({ label, id, slider, className }) => (
  <Row label={label} htmlFor={id} className={clsx('h-[19px]', className)}>
    <span className="ml-[3px] w-[103px]"><PanelSlider label={`${id} 滑块`} value={slider} /></span>
    <input id={id} defaultValue="100" className="ml-[5px] h-[19px] w-[37px] border border-[#ddd] border-t-[#aaa] bg-white px-[3px] text-[11px]" />
    <span className="ml-1 text-[11px]">%</span>
  </Row>
);

const LayerStyle = () => (
  <div role="dialog" aria-label="图层样式" className="absolute left-[521px] top-[282px] w-[586px] rounded-md border border-[#555b63] bg-[linear-gradient(to_right,#ffffff66_410px,#d9effdcc_430px)] px-1.5 pb-1.5 backdrop-blur-[3px]">
    <GlassTitle buttons={<button aria-label="关闭" className="flex w-[45px] items-center justify-center"><CloseGlyph /></button>}>图层样式</GlassTitle>
    <div className="flex border border-[#7c838b] bg-[#ececec] pb-[10px] pl-[10px]">
      <div className="mt-3.5 flex w-[101px] shrink-0 flex-col border border-black">
        <button className="h-6 border-b border-black pl-1 text-left">样式</button>
        <button className="mt-px h-6 border-y border-black pl-1 text-left">混合选项:默认</button>
        {EFFECTS.map(([name, kind]) => (
          <div key={name} className={clsx('flex h-[22px] border-b border-white', kind === 'sub' ? 'pl-5' : 'pl-1.5', kind === 'on' && 'bg-[#3399ff] text-white')}>
            <Check label={name} checked={kind === 'on'} box="size-[11px]" />
          </div>
        ))}
      </div>
      <fieldset className="ml-4 mt-2 h-[451px] w-[315px] border border-[#999] px-[9px]">
        <legend className="ml-1.5 h-4 px-1">渐变叠加</legend>
        <fieldset className="mt-1 w-[295px] border border-[#999] pb-[9px]">
          <legend className="ml-[15px] h-4 px-1">渐变</legend>
          <Row label="混合模式(O):" htmlFor="blend" className="mt-[9px] h-[21px]">
            <Select id="blend" value="正常" className="h-[21px] w-[122px] border-[#ddd] border-t-[#aaa]" />
          </Row>
          <SliderRow label="不透明度(P):" id="opacity" slider="100" className="mt-0.5" />
          <Row label="渐变:" htmlFor="grad" className="mt-1 h-[18px]">
            <button id="grad" className="flex h-[18px] w-[122px] items-center border-2 border-black">
              <span className="h-full flex-1 border border-white bg-[linear-gradient(to_right,#e8201c,#b54f9b_15%,#1a4c9f_34%,#6ec5d6_50%,#66b82b_68%,#c3e630_78%,#f1e83c_85%,#e8201c)]" />
              <span className="flex h-full w-2.5 items-center justify-center border-l border-black bg-white"><Caret className="scale-75" /></span>
            </button>
            <Check label="反向(R)" className="ml-[9px]" />
          </Row>
          <Row label="样式(L):" htmlFor="style" className="mt-[5px] h-[21px]">
            <Select id="style" value="线性" className="h-[21px] w-[62px] border-[#ddd] border-t-[#aaa]" />
            <Check label="与图层对齐(I)" checked className="mb-1 ml-2" />
          </Row>
          <Row label="角度(N):" htmlFor="angle" className="mt-[3px] h-9">
            <svg viewBox="0 0 36 36" className="size-9"><circle cx="18" cy="18" r="17" fill="#f3f3f1" stroke="#3f527f" strokeWidth="1.500" /><path d="M18 1v17" stroke="#000" /><path d="M16 16h4v4h-4z" /></svg>
            <input id="angle" defaultValue="90" className="ml-[3px] h-[19px] w-[42px] border border-[#ddd] border-t-[#aaa] bg-white px-0.5 text-[11px]" />
            <span className="ml-0.5">度</span>
          </Row>
          <SliderRow label="缩放(S):" id="scale" slider="64" className="mt-1" />
        </fieldset>
        <div className="mt-[5px] flex gap-[10px] pl-[51px]">
          <DialogButton className="h-[19px] w-[91px]">设置为默认值</DialogButton>
          <DialogButton className="h-[19px] w-[91px]">复位为默认值</DialogButton>
        </div>
      </fieldset>
      <div className="ml-4 mt-[15px] flex w-[102px] flex-col gap-[9px]">
        <DialogButton primary className="h-[19px]">确定</DialogButton>
        <DialogButton className="h-[19px]">取消</DialogButton>
        <DialogButton className="h-[19px]">新建样式(W)...</DialogButton>
        <Check label="预览(V)" checked className="-mt-0.5 ml-5" />
        <div className="-mt-1 ml-[17px] flex size-[66px] items-center justify-center border border-[#f4f4f4] border-l-[#999] border-t-[#999] bg-[#d9d9d9]">
          <div className="size-[31px] bg-[linear-gradient(to_bottom,#b0dc2c,#66b82b_22%,#6ec5d6_55%,#1a4c9f_85%,#3c4a9f)]" />
        </div>
      </div>
    </div>
  </div>
);

const Watermark = () => (
  <div className="pointer-events-none absolute bottom-7 right-[70px] flex w-[226px] flex-col text-white opacity-75 [text-shadow:0_0_2px_#999]">
    <div className="flex items-end">
      <span className="w-[78px] text-[50px] font-bold leading-[50px]">Bai</span>
      <div className="mb-1 grid">
        <svg viewBox="0 0 68 74" className="col-start-1 row-start-1 h-[74px] w-[68px] fill-white">
          <ellipse cx="9" cy="29" rx="9" ry="11" /><ellipse cx="26" cy="12" rx="8" ry="11" /><ellipse cx="46" cy="13" rx="8" ry="11" /><ellipse cx="59" cy="33" rx="8" ry="11" />
          <path d="M34 30c8 0 11 6 16 12s13 10 12 20c-1 11-10 11-16 10s-16-1-22 0S7 73 6 62c-1-10 8-14 13-20s7-12 15-12z" />
        </svg>
        <span className="col-start-1 row-start-1 self-end pb-1 pl-[14px] text-[32px] font-bold leading-8 text-[#aaa]">du</span>
      </div>
      <span className="text-[38px] font-black leading-[54px]">经验</span>
    </div>
    <span className="-mt-0.5 text-[26px] leading-8">jingyan.baidu.com</span>
  </div>
);

const Annotation = () => (
  <svg className="pointer-events-none absolute left-0 top-0 h-[720px] w-[660px] fill-none stroke-[#f00] stroke-[4]">
    <path d="M57 489h455v167H57z" />
    <path d="M643 696L421 542M441 542l-21-2 10 18" />
  </svg>
);

export default function App() {
  return (
    <div className="relative overflow-hidden whitespace-nowrap font-['Open_Sans','Noto_Sans_CJK_SC',sans-serif] text-xs leading-4 text-black">
      <div className="flex min-h-screen flex-col border border-[#566c92] bg-[#dcdcdc] px-[3px] pb-[3px]">
        <div className="flex flex-1 flex-col bg-[#d6d6d6]">
          <TopBar />
          <nav className="mx-px flex h-[23px] shrink-0 items-center gap-[18px] border-t border-[#888] pl-[7px]">
            {MENUS.map((m) => <button key={m}>{m}</button>)}
          </nav>
          <div className="flex flex-1 flex-col border border-[#444]">
            <OptionsBar />
            <div className="flex flex-1">
              <Toolbox />
              <DocumentWindow />
              <DockArea />
            </div>
          </div>
        </div>
      </div>
      <LayerStyle />
      <GradientEditor />
      <Watermark />
      <Annotation />
    </div>
  );
}
